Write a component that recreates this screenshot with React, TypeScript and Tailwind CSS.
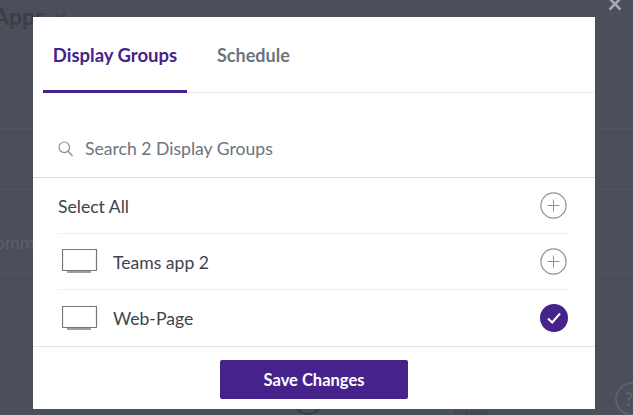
import React from "react";

const Monitor = () => (
  <svg width="36" height="25" viewBox="0 0 36 25" fill="none" className="shrink-0">
    <rect x="0.5" y="0.5" width="34" height="21" rx="0.5" stroke="#6f7780" strokeWidth="1.2" />
    <path d="M5 23H29" stroke="#6f7780" strokeWidth="1.4" />
  </svg>
);

const Plus = () => (
  <svg width="27" height="27" viewBox="0 0 27 27" fill="none">
    <circle cx="13.5" cy="13.5" r="12.6" stroke="#919191" strokeWidth="1.2" />
    <path d="M13.5 7.5V19.5M7.5 13.5H19.5" stroke="#919191" strokeWidth="1" />
  </svg>
);

const Check = () => (
  <svg width="28" height="28" viewBox="0 0 28 28" fill="none">
    <circle cx="14" cy="14" r="14" fill="#46238c" />
    <path d="M8 14.5L12.2 18.5L20 9.5" stroke="#fff" strokeWidth="2" />
  </svg>
);

export default function App() {
  return (
    <div className="relative h-[415px] w-[633px] overflow-hidden bg-[#4a4f59] font-['Lato','Open_Sans',sans-serif]">
      <div className="flex h-[33px] items-center text-[23px] font-bold leading-none text-[#3a3e47]">
        <span className="-ml-[7px]">Apps</span>
        <svg width="10" height="7" viewBox="0 0 12 8" fill="none" className="ml-[11px]"><path d="M1 1L6 6L11 1" stroke="#3a3e47" strokeWidth="1.5" /></svg>
      </div>
      <div className="mt-[95px] border-t border-[#50555f]" />
      <div className="mt-[60px] border-t border-[#50555f]" />
      <div className="-ml-[17px] mt-[42px] text-[18px] leading-5 text-[#5c616b]">Comm</div>
      <div className="mt-[21px] border-t border-[#50555f]" />

      <svg width="14" height="14" viewBox="0 0 14 14" fill="none" className="absolute left-[608px] top-[-3px]">
        <path d="M1.5 1.5L12.5 12.5M12.5 1.5L1.5 12.5" stroke="#a3aab4" strokeWidth="2.6" />
      </svg>
      <div className="absolute left-[615px] top-[382px] flex h-[34px] w-[34px] items-center justify-center rounded-full border-2 border-[#5c616b] pr-[6px] text-lg font-bold leading-none text-[#5c616b]">?</div>
      <div className="absolute left-[454px] top-[405px] text-sm leading-4 text-[#3a3e47]">pages</div>
      <div className="absolute left-[293px] top-[385px] h-[30px] w-[30px] rounded-full border-2 border-[#3a3e47]" />

      <div className="absolute left-[33px] top-[17px] flex h-[392px] w-[562px] flex-col bg-white">
        <div className="ml-[10px] flex h-[76px] items-stretch border-b border-[#e9e9ea]">
          <div className="mb-[-1px] flex w-[144px] items-center justify-center border-b-[3px] border-[#46238c] pt-[4px] text-[18.5px] font-bold text-[#46238c]">
            Display Groups
          </div>
          <div className="ml-[30px] flex items-center pt-[2px] text-[18px] font-bold text-[#6b7480]">Schedule</div>
        </div>
        <div className="flex h-[85px] items-center gap-[12px] border-b border-[#d9d9db] pl-[25px] pt-[27px]">
          <svg width="15" height="16" viewBox="0 0 15 16" fill="none">
            <circle cx="6.3" cy="6.3" r="5.3" stroke="#8a929b" strokeWidth="1.2" />
            <path d="M10 10.3L14.5 15" stroke="#8a929b" strokeWidth="1.4" />
          </svg>
          <span className="pt-[2px] text-[17.6px] text-[#6b7480]">Search 2 Display Groups</span>
        </div>
        <div className="mx-[25px] flex h-[56px] items-center justify-between border-b border-[#eeeeef] pr-[3px] text-[17.6px] text-[#3d434c]">
          <span className="pt-[3px]">Select All</span>
          <Plus />
        </div>
        <div className="mx-[25px] flex h-[56px] items-center border-b border-[#eeeeef] pl-[4px] pr-[3px] text-[17.6px] text-[#3d434c]">
          <Monitor />
          <span className="ml-[15px] pt-[3px]">Teams app 2</span>
          <span className="ml-auto flex"><Plus /></span>
        </div>
        <div className="flex h-[57px] items-center border-b border-[#e4e4e5] pl-[29px] pr-[27px] text-[17.6px] text-[#3d434c]">
          <Monitor />
          <span className="ml-[15px] pt-[3px]">Web-Page</span>
          <span className="ml-auto flex"><Check /></span>
        </div>
        <div className="flex flex-1 items-start justify-center pt-[13px]">
          <button className="h-[39px] w-[188px] rounded-[2px] bg-[#46238c] pt-[2px] text-[16.5px] font-bold text-white">Save Changes</button>
        </div>
      </div>
    </div>
  );
}
